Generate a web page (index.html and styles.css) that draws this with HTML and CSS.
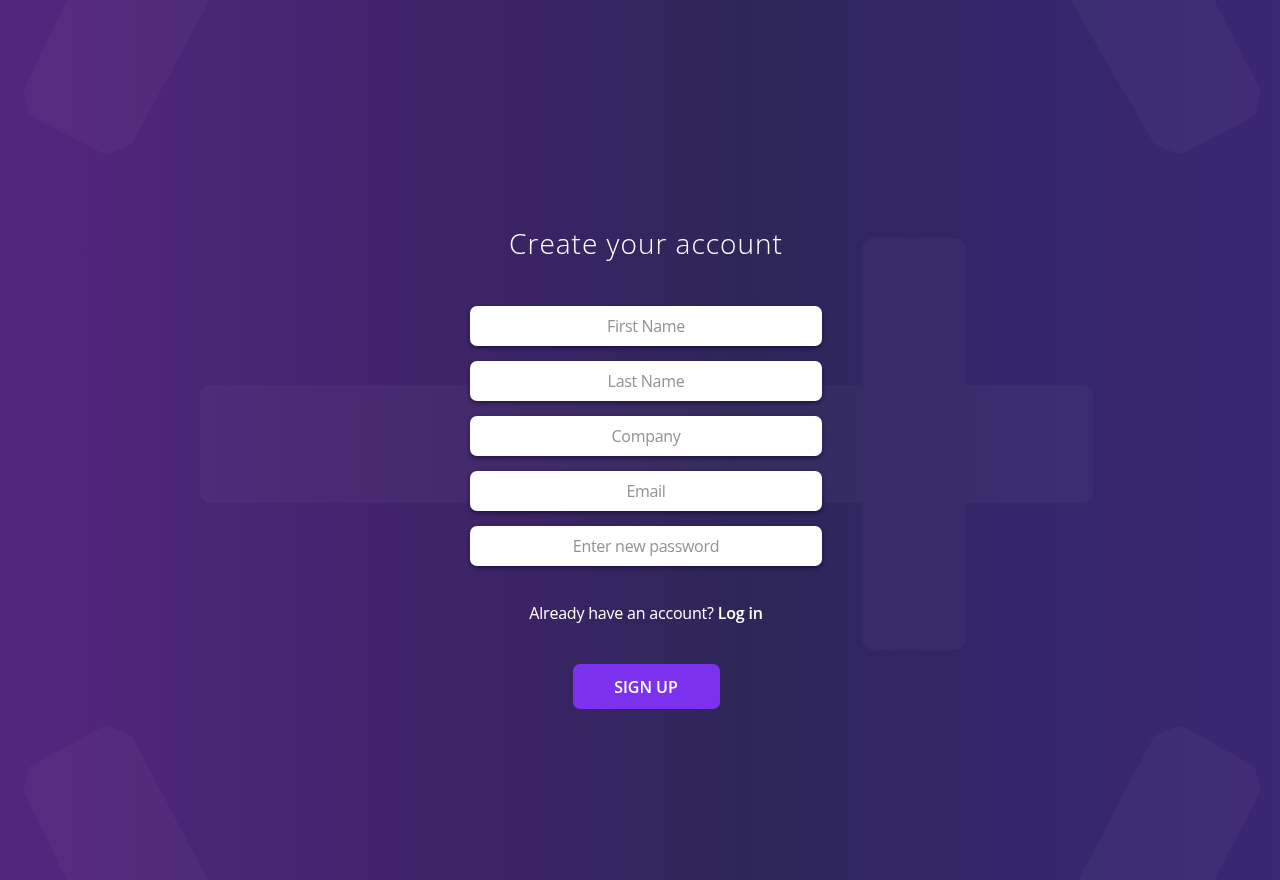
FILE: index.html
```html
<!DOCTYPE html>
<html lang="en">
<head>
  <meta charset="UTF-8" />
  <meta name="viewport" content="width=device-width, initial-scale=1.0"/>
  <title>Create your account</title>
  <link rel="stylesheet" href="styles.css">
</head>
<body>
  <svg id="bg-shapes" viewBox="0 0 1280 880" preserveAspectRatio="none" aria-hidden="true">
    <g opacity="0.032" fill="#fff" stroke="#fff" stroke-width="16" stroke-linejoin="round">
      <!-- center cross -->
      <rect x="208" y="393" width="877" height="102" rx="4" />
      <rect x="870" y="246" width="88" height="396" rx="4" />
      <!-- corner pieces -->
      <polygon points="80,-10 206,-10 126,138 106,146 36,110 32,92" />
      <polygon points="1200,-10 1074,-10 1160,138 1180,146 1248,110 1252,92" />
      <polygon points="80,890 204,890 126,742 106,734 36,772 32,790" />
      <polygon points="1200,890 1082,890 1160,742 1180,734 1248,772 1252,790" />
    </g>
  </svg>

  <main class="signup">
    <h1>Create your account</h1>

    <form class="fields" onsubmit="return false">
      <input type="text" placeholder="First Name" />
      <input type="text" placeholder="Last Name" />
      <input type="text" placeholder="Company" />
      <input type="email" placeholder="Email" />
      <input type="password" placeholder="Enter new password" />
    </form>

    <p class="login">Already have an account? <a href="#">Log in</a></p>

    <button type="button">Sign up</button>
  </main>
</body>
</html>
```

FILE: styles.css
```css
html, body {
  height: 100%;
}

body {
  font-family: "Open Sans", "Noto Sans", sans-serif;
  margin: 0;
  padding: 0;
  color: #fff;
  background: linear-gradient(to right, #53267d 0%, #472571 22%, #3a2464 42%, #2e2658 58%, #34266a 78%, #3c2772 100%);
  overflow: hidden;
}

#bg-shapes {
  position: fixed;
  top: 0;
  left: 0;
  width: 100vw;
  height: 100vh;
  z-index: -1;
}

.signup {
  display: flex;
  flex-direction: column;
  align-items: center;
  padding-top: 223px;
  padding-left: 12px;
}

h1 {
  margin: 0;
  font-size: 28px;
  font-weight: 300;
  line-height: 40px;
  letter-spacing: 1px;
}

.fields {
  display: flex;
  flex-direction: column;
  gap: 15px;
  margin-top: 43px;
  width: 352px;
}

.fields input {
  height: 40px;
  padding: 0 12px;
  box-sizing: border-box;
  border: none;
  border-radius: 7px;
  background: #fff;
  box-shadow: 0 2px 4px rgba(10, 0, 40, 0.55);
  font-family: "Open Sans", "Noto Sans", sans-serif;
  font-size: 16px;
  text-align: center;
  letter-spacing: -0.3px;
}

.fields input::placeholder {
  color: #939393;
}

.login {
  margin: 35px 0 0;
  font-size: 16px;
  line-height: 24px;
  letter-spacing: -0.2px;
}

.login a {
  color: #fff;
  font-weight: 600;
  text-decoration: none;
}

button {
  margin-top: 39px;
  width: 147px;
  height: 45px;
  border: none;
  border-radius: 7px;
  background: #7b31ee;
  color: #fff;
  font-family: "Open Sans", "Noto Sans", sans-serif;
  font-size: 16px;
  font-weight: 600;
  text-transform: uppercase;
  cursor: pointer;
}
```
